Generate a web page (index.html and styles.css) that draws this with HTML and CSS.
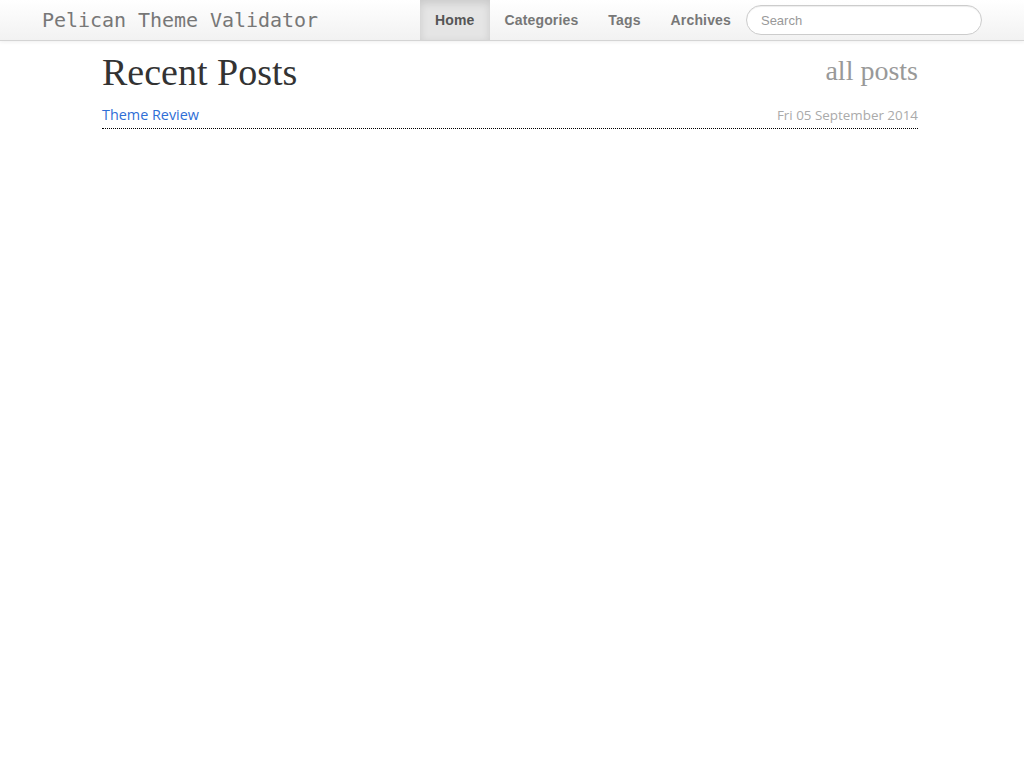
FILE: index.html
```html
<!DOCTYPE html>
<html>
<head>
<meta charset="utf-8">
<title>Pelican Theme Validator</title>
<link rel="stylesheet" href="styles.css">
</head>
<body>
<header class="navbar">
  <a class="brand" href="#">Pelican Theme Validator</a>
  <nav class="nav">
    <a class="nav-link active" href="#">Home</a>
    <a class="nav-link" href="#">Categories</a>
    <a class="nav-link" href="#">Tags</a>
    <a class="nav-link" href="#">Archives</a>
  </nav>
  <input class="search" type="text" placeholder="Search">
</header>
<main class="container">
  <div class="page-head">
    <h1 class="title">Recent Posts</h1>
    <a class="all-posts" href="#">all posts</a>
  </div>
  <div class="post-row">
    <a class="post-link" href="#">Theme Review</a>
    <span class="post-date">Fri 05 September 2014</span>
  </div>
</main>
</body>
</html>
```
FILE: styles.css
```css
html, body { margin: 0; padding: 0; background: #fff; }
body { font-family: "Liberation Sans", Arial, sans-serif; }
a { text-decoration: none; }

.navbar {
  height: 40px;
  display: flex;
  align-items: center;
  background: linear-gradient(#ffffff, #f2f2f2);
  border-bottom: 1px solid #d4d4d4;
  box-shadow: 0 1px 4px rgba(0,0,0,0.065);
  padding-left: 42px;
}
.brand {
  font-family: "DejaVu Sans Mono", monospace;
  font-size: 20px;
  letter-spacing: -0.04px;
  color: #777;
  width: 378px;
  line-height: 40px;
}
.nav { display: flex; height: 40px; }
.nav-link {
  font-weight: bold;
  font-size: 14px;
  letter-spacing: 0.15px;
  color: #777;
  padding: 0 15px;
  line-height: 40px;
}
.nav-link.active {
  color: #555;
  background: #e5e5e5;
  box-shadow: inset 0 3px 8px rgba(0,0,0,0.125);
}
.search {
  width: 236px;
  height: 30px;
  box-sizing: border-box;
  border: 1px solid #ccc;
  border-radius: 15px;
  padding: 0 14px;
  font-family: "Liberation Sans", Arial, sans-serif;
  font-size: 13px;
  color: #555;
  background: #fff;
  box-shadow: inset 0 1px 1px rgba(0,0,0,0.075);
  outline: none;
}
.search::placeholder { color: #999; }

.container { width: 816px; margin: 0 0 0 102px; }
.page-head {
  display: flex;
  justify-content: space-between;
  align-items: flex-start;
  margin-top: 9px;
}
.title {
  margin: 0;
  font-family: "Liberation Serif", "Times New Roman", serif;
  font-weight: normal;
  font-size: 38px;
  line-height: 44px;
  color: #333;
}
.all-posts {
  margin-top: 7px;
  font-family: "Liberation Serif", "Times New Roman", serif;
  font-size: 28px;
  line-height: 28px;
  color: #999;
}
.post-row {
  display: flex;
  justify-content: space-between;
  align-items: baseline;
  margin-top: 11px;
  padding-bottom: 3px;
  border-bottom: 1px dotted #000;
}
.post-link {
  font-family: "Open Sans", "Liberation Sans", sans-serif;
  font-size: 14.4px;
  line-height: 20px;
  color: #2f6ed6;
}
.post-date {
  font-family: "Open Sans", "Liberation Sans", sans-serif;
  font-size: 13.4px;
  line-height: 20px;
  color: #aaa;
}
```
